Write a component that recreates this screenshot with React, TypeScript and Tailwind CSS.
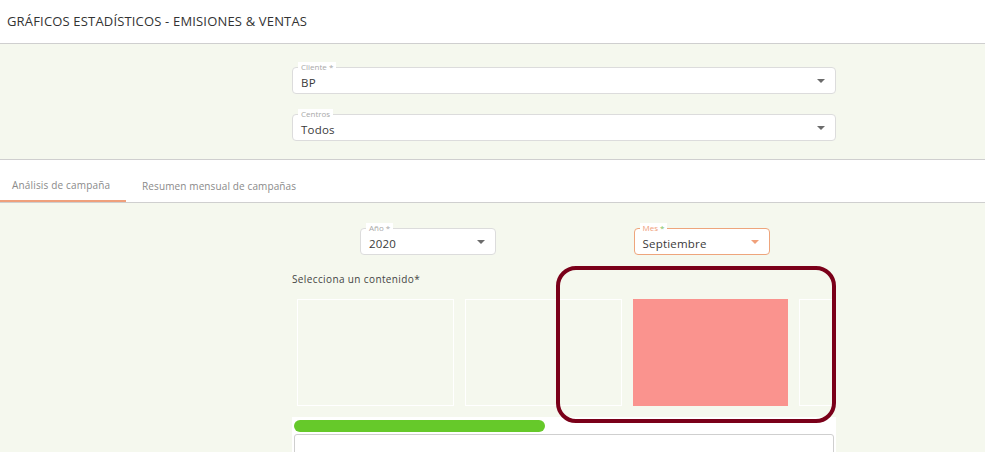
import React from "react";

const font = { fontFamily: "'Open Sans', 'Liberation Sans', sans-serif" };

function Caret({ color = "#6b6b6b" }: { color?: string }) {
  return (
    <svg width="8" height="4" viewBox="0 0 8 4" className="shrink-0">
      <path d="M0 0 L8 0 L4 4 Z" fill={color} />
    </svg>
  );
}

function OutlinedSelect({
  label,
  value,
  className = "",
  active = false,
}: {
  label: React.ReactNode;
  value: string;
  className?: string;
  active?: boolean;
}) {
  return (
    <div
      className={`relative h-[27px] rounded-[4px] bg-white border flex items-center pl-[8px] pr-[10px] ${
        active ? "border-[#eea57c]" : "border-[#dcdcdc]"
      } ${className}`}
    >
      <span
        className={`absolute -top-[6px] left-[5px] px-[3px] text-[8px] leading-[10px] bg-white ${
          active ? "text-[#f0a07a]" : "text-[#a8a8a8]"
        }`}
      >
        {label}
      </span>
      <span className="flex-1 text-[11.5px] tracking-[0.2px] text-[#3a3a3a] pt-[4px]">{value}</span>
      <Caret color={active ? "#f0a07a" : "#6b6b6b"} />
    </div>
  );
}

export default function App() {
  return (
    <div className="w-[985px] h-[452px] overflow-hidden bg-[#f5f8ee]" style={font}>
      {/* header */}
      <div className="h-[44px] bg-white border-b border-[#cfcfcf] flex items-center pl-[7px]">
        <span className="text-[13px] text-[#333] tracking-[0.17px]">
          GRÁFICOS ESTADÍSTICOS - EMISIONES &amp; VENTAS
        </span>
      </div>

      {/* filters */}
      <div className="h-[116px] border-b border-[#cfcfcf] pt-[23px]">
        <div className="ml-[292px] w-[544px] flex flex-col gap-[20px]">
          <OutlinedSelect label="Cliente *" value="BP" />
          <OutlinedSelect label="Centros" value="Todos" />
        </div>
      </div>

      {/* tabs */}
      <div className="h-[43px] bg-white border-b border-[#cfcfcf] flex items-end">
        <div className="w-[126px] h-[42px] border-b-[2px] border-[#efa07c] flex items-center pt-[11px] pl-[12px] text-[10px] tracking-[0.17px] text-[#8a8a8a]">
          Análisis de campaña
        </div>
        <div className="h-[42px] flex items-center pt-[11px] pl-[16px] text-[10px] tracking-[0.12px] text-[#8a8a8a]">
          Resumen mensual de campañas
        </div>
      </div>

      {/* content */}
      <div className="ml-[292px] w-[544px] pt-[25px]">
        <div className="grid grid-cols-2">
          <div className="flex justify-center">
            <OutlinedSelect label="Año *" value="2020" className="w-[136px]" />
          </div>
          <div className="flex justify-center pl-[3px]">
            <OutlinedSelect
              label={
                <>
                  Mes <span className="text-[#7cc25a]">*</span>
                </>
              }
              value="Septiembre"
              className="w-[136px]"
              active
            />
          </div>
        </div>

        <div className="mt-[17px] text-[10px] tracking-[0.38px] text-[#444] leading-[14px]">
          Selecciona un contenido*
        </div>

        <div className="relative mt-[13px]">
          {/* carousel */}
          <div className="overflow-hidden pl-[5px] pb-[11px]">
            <div className="flex gap-[11px]">
              <div className="w-[157px] h-[107px] shrink-0 border border-white" />
              <div className="w-[157px] h-[107px] shrink-0 border border-white" />
              <div className="w-[155px] h-[107px] shrink-0 bg-[#fa938e]" />
              <div className="w-[157px] h-[107px] shrink-0 border border-white" />
            </div>
          </div>

          <div className="bg-white pt-[3px] px-[2px] h-[40px]">
            <div className="w-[251px] h-[12px] rounded-full bg-[#66c92a]" />
            <div className="mt-[2px] h-[30px] border border-[#cfcfcf] rounded-t-[3px]" />
          </div>

          {/* highlight overlay */}
          <div className="absolute left-[264px] -top-[33px] w-[280px] h-[157px] rounded-[20px] border-[4px] border-[#7a0019] pointer-events-none" />
        </div>
      </div>
    </div>
  );
}
